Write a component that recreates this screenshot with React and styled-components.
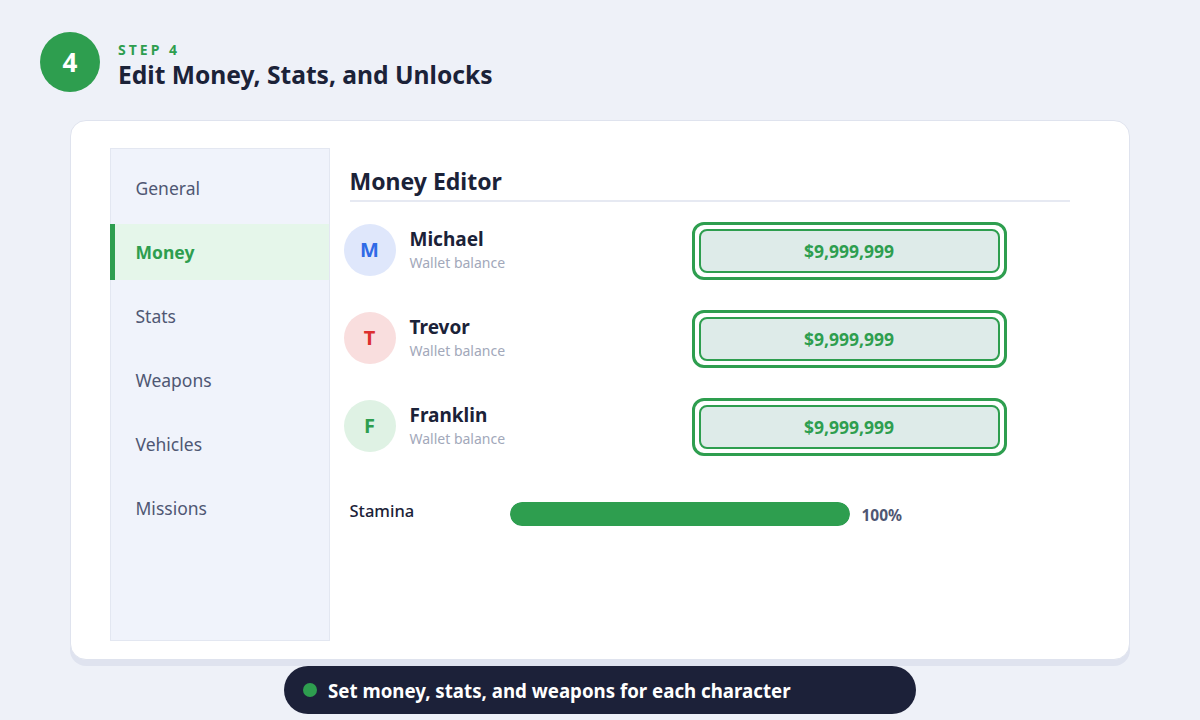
import styled, { createGlobalStyle } from 'styled-components';

const GlobalStyle = createGlobalStyle`
  html, body {
    margin: 0;
    padding: 0;
    background: #eef1f8;
    font-family: "Noto Sans", "Open Sans", sans-serif;
  }
`;

const GREEN = '#2e9e4f';

const Page = styled.div`
  width: 1200px;
  height: 720px;
  box-sizing: border-box;
  padding: 32px 70px 0;
  display: flex;
  flex-direction: column;
`;

const Header = styled.header`
  display: flex;
  align-items: flex-start;
  gap: 18px;
  margin-left: -30px;
`;

const StepBadge = styled.div`
  width: 60px;
  height: 60px;
  border-radius: 50%;
  background: ${GREEN};
  color: #fff;
  font-size: 26px;
  font-weight: 700;
  display: flex;
  align-items: center;
  justify-content: center;
`;

const HeaderText = styled.div`
  margin-top: 10px;
  display: flex;
  flex-direction: column;
  gap: 2px;
`;

const StepLabel = styled.div`
  color: ${GREEN};
  font-size: 14px;
  font-weight: 700;
  letter-spacing: 3px;
  line-height: 16px;
`;

const Title = styled.h1`
  margin: 0;
  color: #1b2238;
  font-size: 24.6px;
  font-weight: 700;
  line-height: 30px;
`;

const Card = styled.section`
  margin-top: 28px;
  height: 540px;
  box-sizing: border-box;
  background: #fff;
  border: 1.5px solid #dfe3ee;
  border-radius: 16px;
  box-shadow: 0 6px 0 #dfe3ef;
  padding: 27px 40px 18px 38.5px;
  display: flex;
`;

const Sidebar = styled.nav`
  width: 220px;
  box-sizing: border-box;
  background: #f0f3fb;
  border: 1px solid #e3e7f1;
  padding-top: 11px;
  display: flex;
  flex-direction: column;
  gap: 8px;
`;

const NavItem = styled.div`
  height: 56px;
  display: flex;
  align-items: center;
  margin-left: -1px;
  padding-left: ${p => (p.$active ? '21px' : '26px')};
  border-left: ${p => (p.$active ? `5px solid ${GREEN}` : 'none')};
  background: ${p => (p.$active ? '#e5f6ea' : 'transparent')};
  color: ${p => (p.$active ? GREEN : '#4f5773')};
  font-size: 17.5px;
  font-weight: ${p => (p.$active ? 700 : 400)};
`;

const Content = styled.div`
  flex: 1;
  padding: 18px 19px 0 14px;
  display: flex;
  flex-direction: column;
`;

const SectionTitle = styled.h2`
  margin: 0 0 0 6px;
  padding-bottom: 4px;
  border-bottom: 2px solid #e6e9f2;
  color: #1b2238;
  font-size: 23px;
  font-weight: 700;
  line-height: 30px;
`;

const Rows = styled.div`
  margin-top: 20px;
  display: flex;
  flex-direction: column;
  gap: 30px;
`;

const Row = styled.div`
  height: 58px;
  display: flex;
  align-items: center;
`;

const Avatar = styled.div`
  width: 52px;
  height: 52px;
  margin-top: -3px;
  border-radius: 50%;
  background: ${p => p.$bg};
  color: ${p => p.$fg};
  font-size: 20px;
  font-weight: 700;
  display: flex;
  align-items: center;
  justify-content: center;
  flex-shrink: 0;
`;

const Who = styled.div`
  width: 282px;
  margin-left: 14px;
  margin-top: -2px;
  display: flex;
  flex-direction: column;
  gap: 2px;
`;

const Name = styled.div`
  color: #1b2238;
  font-size: 19px;
  font-weight: 700;
  line-height: 24px;
`;

const Sub = styled.div`
  color: #a2a8ba;
  font-size: 14px;
  line-height: 20px;
`;

const MoneyOuter = styled.div`
  width: 315px;
  height: 58px;
  box-sizing: border-box;
  border: 3px solid ${GREEN};
  border-radius: 12px;
  padding: 4px;
  background: #fff;
`;

const MoneyInner = styled.div`
  height: 100%;
  box-sizing: border-box;
  border: 2px solid ${GREEN};
  border-radius: 8px;
  background: #deebe9;
  color: ${GREEN};
  font-size: 17.5px;
  font-weight: 700;
  display: flex;
  align-items: center;
  justify-content: center;
`;

const StatRow = styled.div`
  margin-top: 46px;
  margin-left: 6px;
  display: flex;
  align-items: center;
`;

const StatLabel = styled.div`
  width: 160px;
  color: #1b2238;
  font-size: 16.5px;
  font-weight: 500;
  margin-top: -8px;
`;

const Track = styled.div`
  width: 340px;
  height: 24px;
  border-radius: 12px;
  background: #e6e9f2;
  overflow: hidden;
`;

const Fill = styled.div`
  height: 100%;
  border-radius: 12px;
  background: ${GREEN};
`;

const StatValue = styled.div`
  margin-left: 12px;
  color: #4f5773;
  font-size: 15.5px;
  font-weight: 700;
  margin-top: 2px;
`;

const Toast = styled.div`
  align-self: center;
  margin-top: 6px;
  width: 632px;
  height: 48px;
  box-sizing: border-box;
  border-radius: 24px;
  background: #1c2139;
  color: #fff;
  font-size: 18.7px;
  font-weight: 700;
  display: flex;
  align-items: center;
  gap: 11px;
  padding-left: 19px;
`;

const Dot = styled.span`
  width: 14px;
  height: 14px;
  border-radius: 50%;
  background: ${GREEN};
`;

const navItems = ['General', 'Money', 'Stats', 'Weapons', 'Vehicles', 'Missions'];

const characters = [
  { name: 'Michael', letter: 'M', bg: '#dfe7fb', fg: '#2f6ae6' },
  { name: 'Trevor', letter: 'T', bg: '#f9dede', fg: '#dc2f2f' },
  { name: 'Franklin', letter: 'F', bg: '#dff2e4', fg: GREEN },
];

export default function App() {
  const stamina = 100;
  return (
    <>
      <GlobalStyle />
      <Page>
        <Header>
          <StepBadge>4</StepBadge>
          <HeaderText>
            <StepLabel>STEP 4</StepLabel>
            <Title>Edit Money, Stats, and Unlocks</Title>
          </HeaderText>
        </Header>
        <Card>
          <Sidebar>
            {navItems.map(item => (
              <NavItem key={item} $active={item === 'Money'}>{item}</NavItem>
            ))}
          </Sidebar>
          <Content>
            <SectionTitle>Money Editor</SectionTitle>
            <Rows>
              {characters.map(c => (
                <Row key={c.name}>
                  <Avatar $bg={c.bg} $fg={c.fg}>{c.letter}</Avatar>
                  <Who>
                    <Name>{c.name}</Name>
                    <Sub>Wallet balance</Sub>
                  </Who>
                  <MoneyOuter>
                    <MoneyInner>$9,999,999</MoneyInner>
                  </MoneyOuter>
                </Row>
              ))}
            </Rows>
            <StatRow>
              <StatLabel>Stamina</StatLabel>
              <Track>
                <Fill style={{ width: `${stamina}%` }} />
              </Track>
              <StatValue>{stamina}%</StatValue>
            </StatRow>
          </Content>
        </Card>
        <Toast>
          <Dot />
          Set money, stats, and weapons for each character
        </Toast>
      </Page>
    </>
  );
}
